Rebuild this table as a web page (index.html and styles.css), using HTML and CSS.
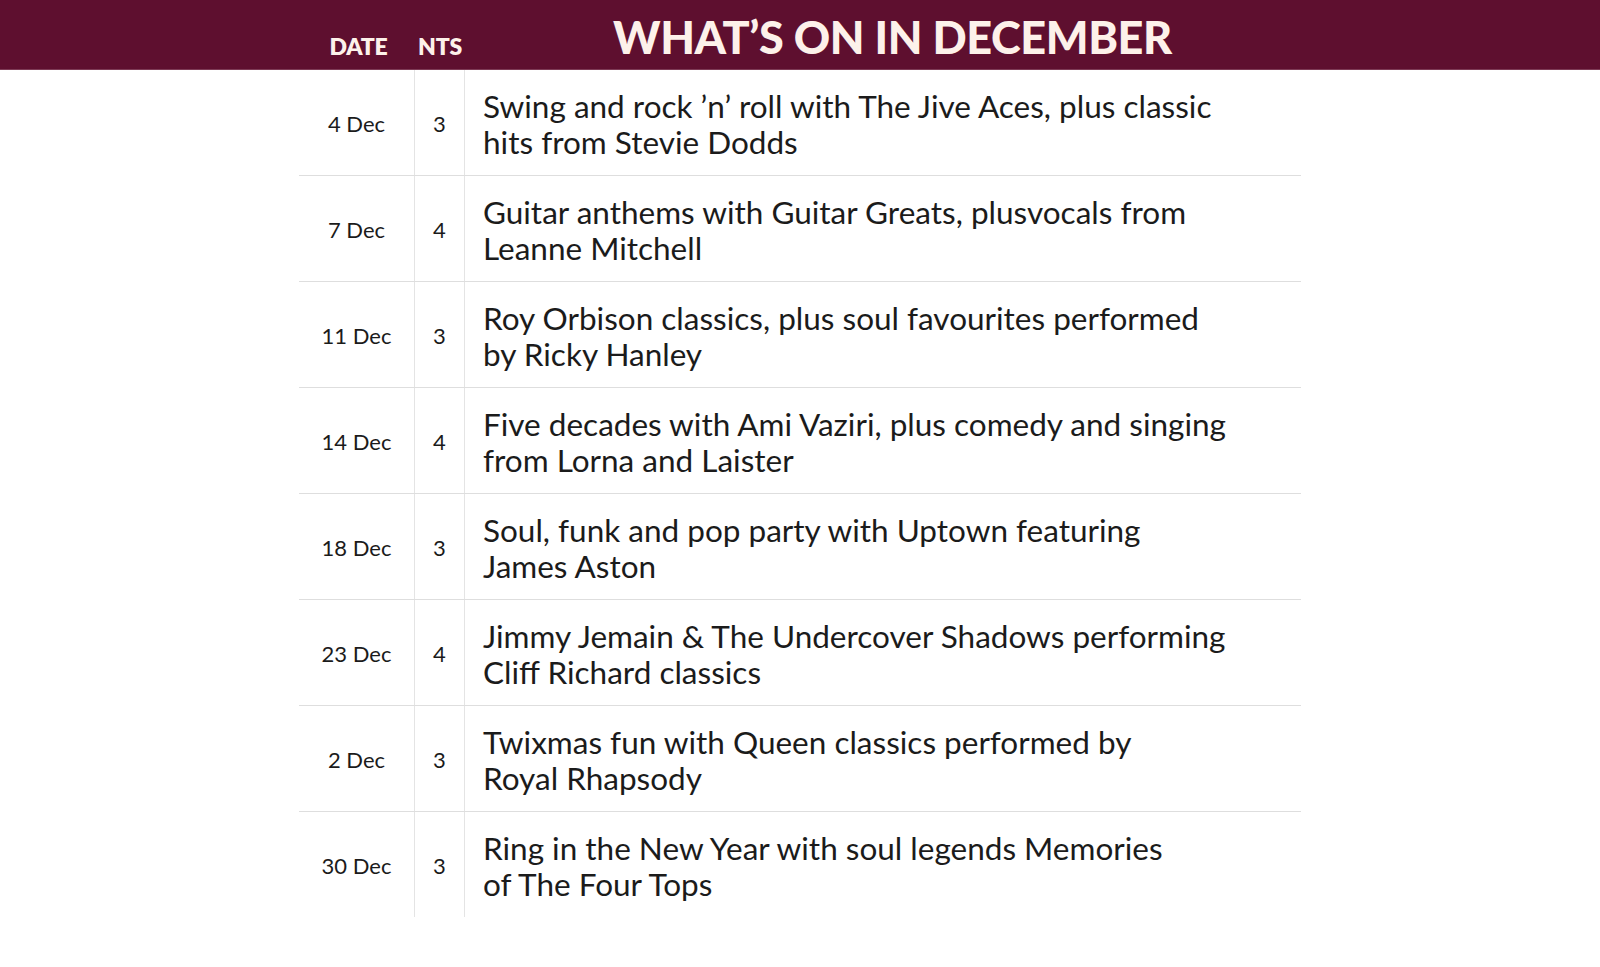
FILE: index.html
```html
<!DOCTYPE html>
<html lang="en">
<head>
<meta charset="utf-8">
<title>What's on in December</title>
<link rel="stylesheet" href="styles.css">
</head>
<body>
<header class="bar">
  <div class="bar-inner">
    <div class="h-col h-date">DATE</div>
    <div class="h-col h-nts">NTS</div>
    <h1 class="title">WHAT’S ON IN DECEMBER</h1>
  </div>
</header>
<main class="table">
  <div class="row">
    <div class="cell date">4 Dec</div>
    <div class="cell nts">3</div>
    <div class="cell desc">Swing and rock ’n’ roll with The Jive Aces, plus classic<br>hits from Stevie Dodds</div>
  </div>
  <div class="row">
    <div class="cell date">7 Dec</div>
    <div class="cell nts">4</div>
    <div class="cell desc">Guitar anthems with Guitar Greats, plusvocals from<br>Leanne Mitchell</div>
  </div>
  <div class="row">
    <div class="cell date">11 Dec</div>
    <div class="cell nts">3</div>
    <div class="cell desc">Roy Orbison classics, plus soul favourites performed<br>by Ricky Hanley</div>
  </div>
  <div class="row">
    <div class="cell date">14 Dec</div>
    <div class="cell nts">4</div>
    <div class="cell desc">Five decades with Ami Vaziri, plus comedy and singing<br>from Lorna and Laister</div>
  </div>
  <div class="row">
    <div class="cell date">18 Dec</div>
    <div class="cell nts">3</div>
    <div class="cell desc">Soul, funk and pop party with Uptown featuring<br>James Aston</div>
  </div>
  <div class="row">
    <div class="cell date">23 Dec</div>
    <div class="cell nts">4</div>
    <div class="cell desc">Jimmy Jemain &amp; The Undercover Shadows performing<br>Cliff Richard classics</div>
  </div>
  <div class="row">
    <div class="cell date">2 Dec</div>
    <div class="cell nts">3</div>
    <div class="cell desc">Twixmas fun with Queen classics performed by<br>Royal Rhapsody</div>
  </div>
  <div class="row last">
    <div class="cell date">30 Dec</div>
    <div class="cell nts">3</div>
    <div class="cell desc">Ring in the New Year with soul legends Memories<br>of The Four Tops</div>
  </div>
</main>
</body>
</html>
```
FILE: styles.css
```css
html, body {
  margin: 0;
  padding: 0;
  background: #ffffff;
}
body {
  font-family: "Lato", "Liberation Sans", sans-serif;
  color: #1b1b1b;
  width: 1600px;
  height: 967px;
  overflow: hidden;
}
.bar {
  background: #5e0f2f;
  height: 69px;
  border-bottom: 1px solid #7d3a55;
}
.bar-inner {
  margin-left: 299px;
  width: 1002px;
  height: 69px;
  display: grid;
  grid-template-columns: 116px 50px 1fr;
  align-items: end;
}
.h-col {
  color: #fdf1ea;
  font-weight: 800;
  font-size: 23px;
  text-align: center;
  padding-bottom: 9px;
  letter-spacing: -0.2px;
  white-space: nowrap;
}
.h-date {
  padding-left: 3px;
}
.title {
  margin: 0;
  color: #fdf1ea;
  font-weight: 900;
  font-size: 45px;
  letter-spacing: -0.4px;
  line-height: 1;
  padding-bottom: 9px;
  padding-left: 148px;
  white-space: nowrap;
}
.table {
  margin-left: 299px;
  width: 1002px;
}
.row {
  display: grid;
  grid-template-columns: 116px 50px 1fr;
  height: 105px;
  border-bottom: 1px solid #dedede;
}
.row.last {
  border-bottom: none;
}
.cell {
  display: flex;
  align-items: center;
}
.date {
  justify-content: center;
  font-size: 22px;
  border-right: 1px solid #e4e4e4;
  padding-top: 2px;
}
.nts {
  justify-content: center;
  font-size: 22px;
  border-right: 1px solid #e4e4e4;
  padding-top: 2px;
}
.desc {
  padding-left: 18px;
  font-size: 31.5px;
  line-height: 36px;
  padding-top: 2px;
  white-space: nowrap;
}
```
